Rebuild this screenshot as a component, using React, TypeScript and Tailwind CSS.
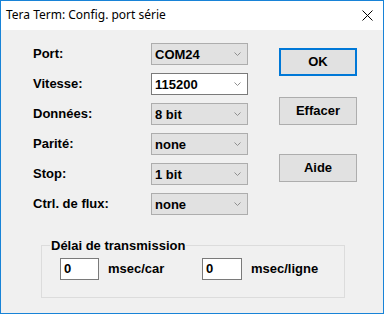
import React from 'react';

type Row = {
  label: string;
  value: string;
  editable?: boolean;
};

const rows: Row[] = [
  { label: 'Port:', value: 'COM24' },
  { label: 'Vitesse:', value: '115200', editable: true },
  { label: 'Données:', value: '8 bit' },
  { label: 'Parité:', value: 'none' },
  { label: 'Stop:', value: '1 bit' },
  { label: 'Ctrl. de flux:', value: 'none' },
];

const Chevron = () => (
  <svg width="7" height="4" viewBox="0 0 7 4" className="shrink-0">
    <path d="M0.5 0.5 L3.5 3.5 L6.5 0.5" fill="none" stroke="#8f8f8f" strokeWidth="1" />
  </svg>
);

const Combo = ({ value, editable }: { value: string; editable?: boolean }) => (
  <div
    className={`w-[97px] h-[22px] flex items-center justify-between pl-[3px] pr-[6px] border ${
      editable ? 'bg-white border-[#7a7a7a]' : 'bg-[#e1e1e1] border-[#adadad]'
    }`}
  >
    <span className="leading-none">{value}</span>
    <Chevron />
  </div>
);

const DlgButton = ({ label, isDefault }: { label: string; isDefault?: boolean }) => (
  <button
    className={`w-[78px] h-[28px] bg-[#e1e1e1] flex items-center justify-center ${
      isDefault ? 'border-2 border-[#0078d7]' : 'border border-[#adadad]'
    }`}
  >
    {label}
  </button>
);

export default function App() {
  return (
    <div className="w-[384px] h-[314px] border border-[#1883d7] bg-[#f0f0f0] flex flex-col overflow-hidden text-black">
      {/* barre de titre */}
      <div className="h-[29px] bg-white flex items-center justify-between pl-[5px] pr-[10px] shrink-0">
        <span className="text-[12px] font-['Noto_Sans',sans-serif] -mt-[1px]">Tera Term: Config. port série</span>
        <svg width="11" height="11" viewBox="0 0 11 11">
          <path d="M0.5 0.5 L10.5 10.5 M10.5 0.5 L0.5 10.5" stroke="#000" strokeWidth="1" />
        </svg>
      </div>

      <div className="flex-1 flex flex-col font-['Liberation_Sans',Arial,sans-serif] font-bold text-[13px]">
        <div className="h-[208px] flex">
          <div className="pl-[32px] pt-[13px] flex flex-col gap-[8px]">
            {rows.map((row) => (
              <div key={row.label} className="flex items-center h-[22px]">
                <span className="w-[118px]">{row.label}</span>
                <Combo value={row.value} editable={row.editable} />
              </div>
            ))}
          </div>
          <div className="ml-[31px] pt-[18px] flex flex-col">
            <DlgButton label="OK" isDefault />
            <div className="mt-[21px]">
              <DlgButton label="Effacer" />
            </div>
            <div className="mt-[29px]">
              <DlgButton label="Aide" />
            </div>
          </div>
        </div>

        <fieldset className="ml-[40px] w-[304px] h-[60px] border border-[#dcdcdc] px-[18px]">
          <legend className="ml-[-10px] px-[1px] leading-[15px]">Délai de transmission</legend>
          <div className="flex items-center mt-[5px]">
            <div className="w-[39px] h-[22px] bg-white border border-[#7a7a7a] flex items-center pl-[3px]">0</div>
            <span className="ml-[9px] w-[94px]">msec/car</span>
            <div className="w-[40px] h-[22px] bg-white border border-[#7a7a7a] flex items-center pl-[3px]">0</div>
            <span className="ml-[9px]">msec/ligne</span>
          </div>
        </fieldset>
      </div>
    </div>
  );
}
